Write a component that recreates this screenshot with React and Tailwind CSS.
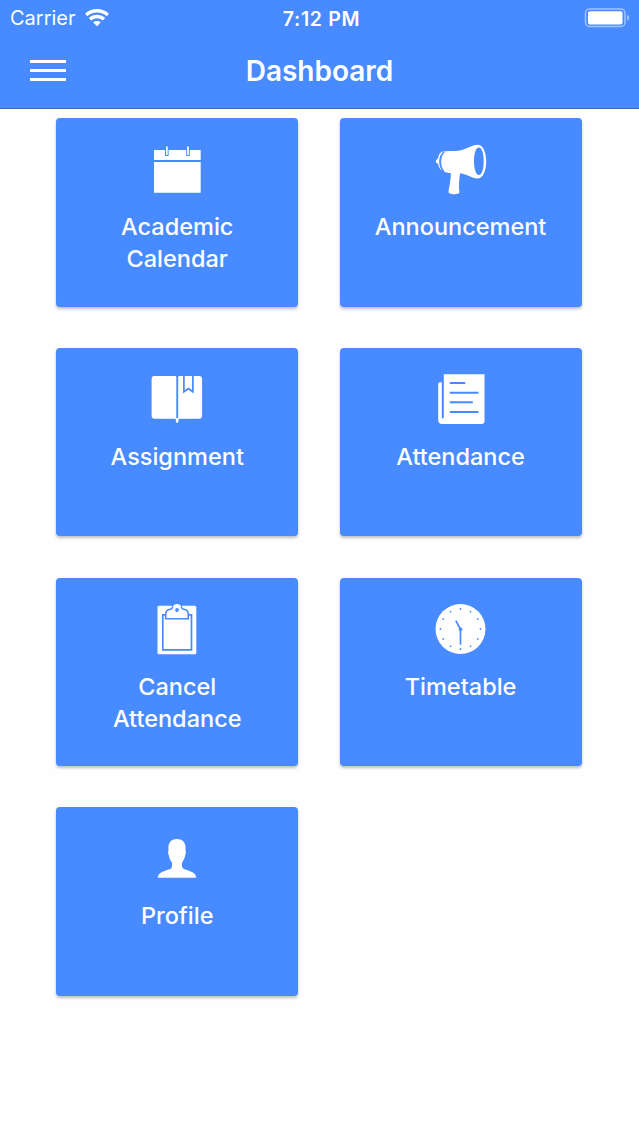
import React from "react";

const BLUE = "#488aff";

function CalendarIcon() {
  return (
    <>
      <path d="M7 10h46.7v10H7z M7 22h46.7v30.7H7z" />
      <path d="M18 9v7h3.6V9z M39.2 9v7h3.6V9z" fill={BLUE} />
      <path d="M19 6.5h1.7V15H19z M40.1 6.5h1.7V15h-1.7z" />
    </>
  );
}

function MegaphoneIcon() {
  return (
    <>
      <path
        fillRule="evenodd"
        d="M12.6 12C14.5 10.7 19 11.2 24 11C34 10.6 40 4.7 46.8 4.7C51.8 4.7 55.2 12 55.2 21.5C55.2 31 51.8 38.5 46.5 38.5C40.5 38.3 36.500 34 29 33.2C28.2 40 27.500 45.500 28.400 52.500C28.400 54.800 19 54.800 17.600 52.400C17.300 49 19.800 43 19.800 33C17 33 13.800 32.500 12.200 30.700C8.500 26.200 8.800 16 12.600 12zM47.900 7.600C44.800 7.600 43 13.500 43 21.200C43 29 45 35 47.900 35C50.900 35 52.700 29 52.700 21.200C52.700 13.500 50.900 7.600 47.900 7.600z"
      />
      <path d="M13.2 11.2C7 14.5 6.7 26.5 11.7 31.1L9.4 29.2C8.2 27.8 7.5 25.8 7.1 24L5.3 22.8C4.700 21.800 4.700 20.600 5.400 19.800L7 18.600C7.500 15.200 8.900 11.400 13.200 11.200z" />
      <path d="M13.3 12C8.700 15.500 8.500 26.500 12.700 31" fill="none" stroke={BLUE} strokeWidth="1.1" />
    </>
  );
}

function BookIcon() {
  return (
    <>
      <path d="M7 6h20.8c.9 0 1.5.5 1.5 1.3v41.4H7.600c-1.900 0-3-1.100-3-3V9c0-1.900 1.100-3 2.400-3z" />
      <path d="M31.200 48.700V7.300c0-.8.600-1.300 1.500-1.300h19.400c1.900 0 3 1.100 3 3v36.700c0 1.900-1.100 3-3 3z" />
      <path d="M28 48.200h4.400c-.8.600-1 1.600-1 3.200 0 1.700-2.400 1.700-2.400 0 0-1.600-.2-2.600-1-3.200z" />
      <path d="M36.900 6v15.800l4.500-3.300 4.500 3.300V6" fill="none" stroke={BLUE} strokeWidth="1.700" />
    </>
  );
}

function PaperIcon() {
  return (
    <>
      <path d="M12.800 4.300h40.700v47c0 1.700-1 2.700-2.700 2.700H11c-2.300 0-3.800-1.500-3.800-3.700v-36c0-1.200.8-2 2-2h1.600v36h2z" />
      <path
        d="M18.800 13h15.400M18.800 22.700h28.700M18.800 32.300h23M18.800 42h28.700"
        fill="none"
        stroke={BLUE}
        strokeWidth="1.900"
      />
    </>
  );
}

function ClipboardIcon() {
  return (
    <>
      <rect x="10.500" y="5.700" width="38.800" height="48.500" rx="1.500" />
      <path d="M15.800 14.800h28.700v35H15.800z" fill="none" stroke={BLUE} strokeWidth="1.700" />
      <path
        d="M18.700 18.700v-4.500c0-3 2.300-4.700 4.700-4.900 1.400-.1 1.600-.8 2-2C26 5 27.700 3.700 30 3.700s4 1.300 4.600 3.600c.4 1.200.6 1.900 2 2 2.400.2 4.700 1.900 4.700 4.900v4.500z"
        stroke={BLUE}
        strokeWidth="1.600"
      />
      <path d="M25.600 7C26.400 4.900 28 3.900 30 3.900s3.600 1 4.400 3.100z" />
      <circle cx="30" cy="10" r="1.900" fill={BLUE} />
    </>
  );
}

function ClockIcon() {
  const ticks = [0, 30, 60, 90, 120, 150, 180, 210, 240, 270, 300, 330];
  return (
    <>
      <circle cx="29.500" cy="29" r="25" />
      {ticks.map((deg) => (
        <circle key={deg} cx="29.500" cy="9" r="0.900" fill={BLUE} transform={`rotate(${deg} 29.5 29)`} />
      ))}
      <path d="M24.800 20.700l4.700 8.600v15.400" fill="none" stroke={BLUE} strokeWidth="1.700" />
      <circle cx="29.500" cy="29.200" r="1.800" fill={BLUE} />
    </>
  );
}

function PersonIcon() {
  return (
    <path d="M30 10.100c-5.200 0-8.600 3.200-8.600 8.800v3c-.5.900-.3 3 .5 4.600.5 3.400 1.700 5.200 3 7 .5 3.400.2 5.900-2.300 6.800-4.700 1.700-11.600 2.700-11.800 8.500h38.400c-.2-5.800-7.100-6.800-11.800-8.500-2.500-.9-2.800-3.400-2.300-6.800 1.300-1.800 2.500-3.600 3-7 .8-1.600 1-3.700.5-4.600v-3c0-5.600-3.400-8.800-8.600-8.800z" />
  );
}

const items = [
  { label: "Academic Calendar", icon: CalendarIcon },
  { label: "Announcement", icon: MegaphoneIcon },
  { label: "Assignment", icon: BookIcon },
  { label: "Attendance", icon: PaperIcon },
  { label: "Cancel Attendance", icon: ClipboardIcon },
  { label: "Timetable", icon: ClockIcon },
  { label: "Profile", icon: PersonIcon },
];

function StatusBar() {
  return (
    <div className="grid h-9 grid-cols-3 items-center pl-2.5 pr-2.5">
      <div className="flex items-center gap-[9px]">
        <span className="text-[20px] leading-6">Carrier</span>
        <svg className="h-[18px] w-6" viewBox="0 0 24 18" fill="none" stroke="white" strokeWidth="3.400">
          <path d="M1.200 5.900C7.200 .4 16.800 .4 22.800 5.900" />
          <path d="M5 10.200c4-3.700 10-3.700 14 0" />
          <path d="M12 17.200l-3.700-3.700c2.100-1.900 5.300-1.900 7.400 0z" fill="white" stroke="none" />
        </svg>
      </div>
      <span className="pl-1 pt-px text-center text-[19.500px] font-semibold leading-6 tracking-[0.7px]">7:12 PM</span>
      <svg className="-mr-px h-5 w-[46px] justify-self-end" viewBox="0 0 46 20">
        <rect x="1.500" y="1" width="39.500" height="17.500" rx="4" fill="none" stroke="#a0c3ff" strokeWidth="1.500" />
        <rect x="4" y="3.300" width="34.500" height="13.200" rx="2" fill="white" />
        <path d="M43 6.700c3 1.500 3 4.500 0 6z" fill="#a0c3ff" />
      </svg>
    </div>
  );
}

function Tile({ label, icon: Icon }) {
  return (
    <button className="flex h-[188.7px] flex-col items-center rounded-[4px] bg-[#488aff] px-8 pt-[22px] shadow-[0_2px_3px_rgba(0,0,0,0.25)]">
      <svg className="size-[60px] shrink-0" viewBox="0 0 60 60" fill="white">
        <Icon />
      </svg>
      <span className="mt-[11px] text-[23.5px] font-medium leading-[32.4px]">{label}</span>
    </button>
  );
}

export default function App() {
  return (
    <div className="min-h-[1136px] w-full bg-[#fefefe] font-['Inter','Liberation_Sans',sans-serif] text-white">
      <header className="h-[109px] border-b border-[#3d6db8] bg-[#488aff]">
        <StatusBar />
        <div className="grid h-[69px] grid-cols-[100px_1fr_100px] items-center">
          <button className="ml-[30px] flex w-9 flex-col gap-1.5" aria-label="Menu">
            <span className="h-[3px] w-full bg-white" />
            <span className="h-[3px] w-full bg-white" />
            <span className="h-[3px] w-full bg-white" />
          </button>
          <h1 className="text-center text-[28px] font-semibold leading-9">Dashboard</h1>
        </div>
      </header>
      <main className="grid grid-cols-2 gap-x-[41.5px] gap-y-[41.1px] pb-10 pl-[56.3px] pr-[57.5px] pt-[9px]">
        {items.map((item) => (
          <Tile key={item.label} {...item} />
        ))}
      </main>
    </div>
  );
}
